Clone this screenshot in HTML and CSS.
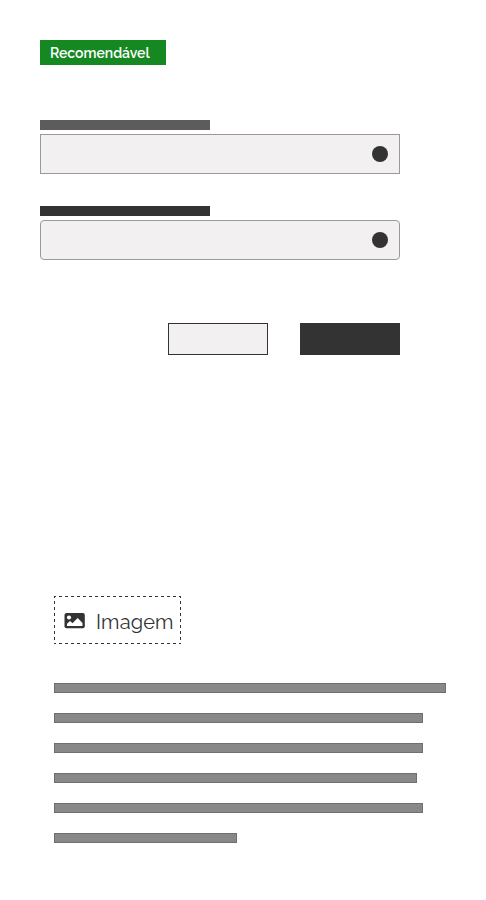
FILE: index.html
```
<!DOCTYPE html>
<html lang="pt">
<head>
<meta charset="utf-8">
<title>Recomendável</title>
<link rel="stylesheet" href="styles.css">
</head>
<body>
<main class="page">
  <span class="badge">Recomendável</span>
  <section class="form">
    <div class="field">
      <div class="label label-soft"></div>
      <div class="input"><span class="dot"></span></div>
    </div>
    <div class="field">
      <div class="label"></div>
      <div class="input rounded"><span class="dot"></span></div>
    </div>
    <div class="actions">
      <div class="button"></div>
      <div class="button primary"></div>
    </div>
  </section>
  <section class="content">
    <div class="image-box">
      <svg class="outline" width="127" height="48" viewBox="0 0 127 48" aria-hidden="true"><path d="M0 .5H127M0 47.5H127M.5 0V48M126.5 0V48" fill="none" stroke="#333" stroke-dasharray="3 3" stroke-dashoffset="1"/></svg>
      <svg class="icon" width="21" height="16" viewBox="0 0 21 16" aria-hidden="true"><rect x=".5" width="20.3" height="15.2" rx="2" fill="#333"/><circle cx="5" cy="4.5" r="2.1" fill="#fff"/><path d="M3 13v-2.2l3-2.8 2.5 2.3 5.2-5.2 4.8 4.9v3z" fill="#fff"/></svg>
      <span class="caption">Imagem</span>
    </div>
    <div class="lines">
      <div class="line full"></div>
      <div class="line"></div>
      <div class="line"></div>
      <div class="line shorter"></div>
      <div class="line"></div>
      <div class="line last"></div>
    </div>
  </section>
</main>
</body>
</html>
```
FILE: styles.css
```
* { box-sizing: border-box; }
body { margin: 0; background: #fff; color: #333; font-family: Raleway, Lato, "Open Sans", sans-serif; }
.page { display: flex; flex-direction: column; align-items: flex-start; height: 900px; padding: 40px; }
.badge { width: 126px; height: 25px; padding-left: 10px; background: #168821; color: #fff; font-size: 14px; font-weight: 600; line-height: 26px; white-space: nowrap; }
.form { width: 360px; margin-top: 55px; }
.field { height: 54px; margin-bottom: 32px; }
.label { width: 170px; height: 10px; margin-bottom: 4px; background: #333; }
.label-soft { background: #5c5c5c; }
.input { display: flex; align-items: center; justify-content: flex-end; height: 40px; padding-right: 11px; border: 1px solid #999; background: #f3f0f1; }
.rounded { border-radius: 4px; }
.dot { width: 16px; height: 16px; border-radius: 50%; background: #333; }
.actions { display: flex; justify-content: flex-end; gap: 32px; padding-top: 31px; }
.button { width: 100px; height: 32px; border: 1px solid #333; background: #f3f0f1; }
.primary { background: #333; }
.content { margin: 241px 0 0 14px; }
.image-box { position: relative; display: flex; align-items: center; width: 127px; height: 48px; padding: 2px 0 0 10px; }
.outline { position: absolute; inset: 0; }
.icon { margin-right: 11px; }
.caption { padding-top: 2px; font-size: 20px; line-height: 24px; letter-spacing: .15px; white-space: nowrap; }
.lines { display: flex; flex-direction: column; gap: 20px; margin-top: 39px; }
.line { width: 369px; height: 10px; border: 1px solid #6f6f6f; background: #888; }
.full { width: 392px; }
.shorter { width: 363px; }
.last { width: 183px; }
```
